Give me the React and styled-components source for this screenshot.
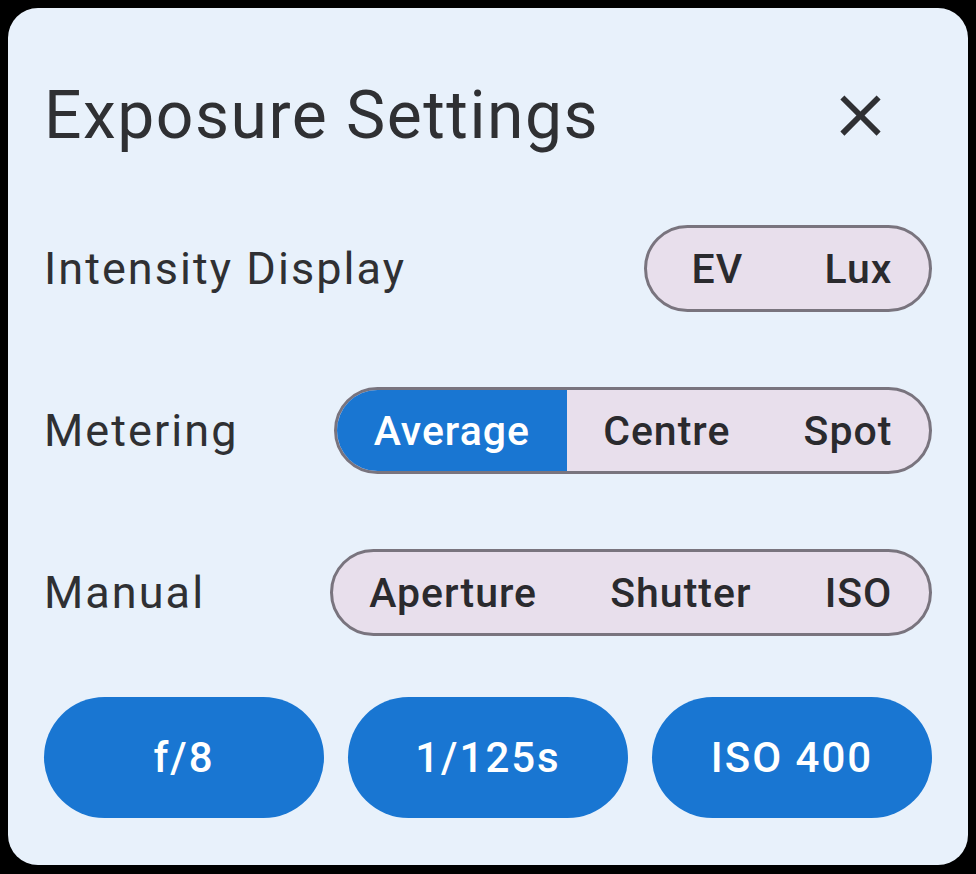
import React, { useState } from "react";
import styled, { createGlobalStyle } from "styled-components";

const Global = createGlobalStyle`
  html, body { margin: 0; padding: 0; background: #000; }
  body { padding: 8px; font-family: Roboto, "Noto Sans", sans-serif; }
  * { box-sizing: border-box; }
`;

const Card = styled.div`
  width: 960px;
  height: 857px;
  background: #e8f1fb;
  border-radius: 30px;
  padding: 56px 36px 47px;
  display: flex;
  flex-direction: column;
`;

const Header = styled.div`
  height: 104px;
  display: flex;
  align-items: center;
  justify-content: space-between;
`;

const Title = styled.h1`
  margin: 0;
  font-family: Roboto, sans-serif;
  font-weight: 400;
  font-size: 66px;
  color: #2f3033;
  letter-spacing: 1.5px;
`;

const IconButton = styled.button`
  width: 96px;
  height: 96px;
  margin-right: 24px;
  border: none;
  background: transparent;
  display: flex;
  align-items: center;
  justify-content: center;
  padding: 0;
  cursor: pointer;
  color: #2f3033;
`;

const Rows = styled.div`
  margin-top: 58px;
  display: flex;
  flex-direction: column;
  gap: 75px;
`;

const Row = styled.div`
  display: flex;
  align-items: center;
  justify-content: space-between;
  height: 87px;
`;

const Label = styled.span`
  font-family: Roboto, sans-serif;
  font-size: 45px;
  letter-spacing: 2.05px;
  color: #2f3033;
`;

const Segmented = styled.div`
  display: flex;
  height: 87px;
  border: 3px solid #79747e;
  border-radius: 44px;
  overflow: hidden;
  background: #e8dfec;
`;

const Segment = styled.button`
  border: none;
  margin: 0;
  padding: 0 36.6px;
  min-width: 141px;
  height: 100%;
  font-family: Roboto, sans-serif;
  font-weight: 500;
  font-size: 41px;
  letter-spacing: 1px;
  background: ${(p) => (p.$active ? "#1976d2" : "transparent")};
  color: ${(p) => (p.$active ? "#ffffff" : "#2a2a2e")};
  cursor: pointer;
`;

const Buttons = styled.div`
  margin-top: 61px;
  display: grid;
  grid-template-columns: repeat(3, 1fr);
  gap: 24px;
`;

const Pill = styled.button`
  height: 121px;
  border: none;
  border-radius: 61px;
  background: #1976d2;
  color: #fff;
  font-family: Roboto, sans-serif;
  font-weight: 500;
  font-size: 42px;
  letter-spacing: 2px;
  cursor: pointer;
`;

function SegmentGroup({ options, value, onChange }) {
  return (
    <Segmented>
      {options.map((o) => (
        <Segment key={o} $active={o === value} onClick={() => onChange && onChange(o)}>
          {o}
        </Segment>
      ))}
    </Segmented>
  );
}

export default function App() {
  const [intensity, setIntensity] = useState(null);
  const [metering, setMetering] = useState("Average");
  const [manual, setManual] = useState(null);
  return (
    <>
      <Global />
      <Card>
        <Header>
          <Title>Exposure Settings</Title>
          <IconButton aria-label="Close">
            <svg width="69" height="69" viewBox="0 0 24 24" fill="currentColor">
              <path d="M19 6.41L17.59 5 12 10.59 6.41 5 5 6.41 10.59 12 5 17.59 6.41 19 12 13.41 17.59 19 19 17.59 13.41 12z" />
            </svg>
          </IconButton>
        </Header>
        <Rows>
          <Row>
            <Label>Intensity Display</Label>
            <SegmentGroup options={["EV", "Lux"]} value={intensity} onChange={setIntensity} />
          </Row>
          <Row>
            <Label>Metering</Label>
            <SegmentGroup options={["Average", "Centre", "Spot"]} value={metering} onChange={setMetering} />
          </Row>
          <Row>
            <Label>Manual</Label>
            <SegmentGroup options={["Aperture", "Shutter", "ISO"]} value={manual} onChange={setManual} />
          </Row>
        </Rows>
        <Buttons>
          <Pill>f/8</Pill>
          <Pill>1/125s</Pill>
          <Pill>ISO 400</Pill>
        </Buttons>
      </Card>
    </>
  );
}
